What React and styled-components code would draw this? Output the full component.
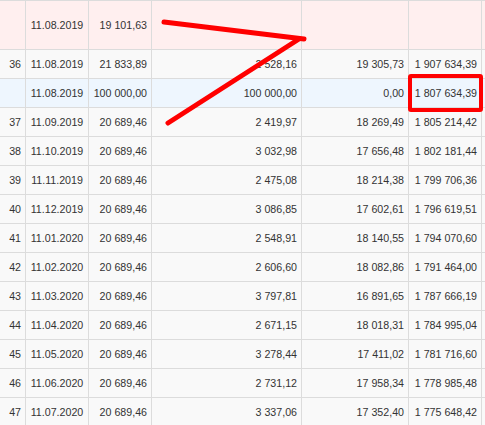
import styled, { createGlobalStyle } from "styled-components";

const GlobalStyle = createGlobalStyle`
  html, body {
    margin: 0;
    padding: 0;
    background: #f9f9f9;
    overflow: hidden;
  }
  body {
    font-family: "Liberation Sans", Arial, sans-serif;
    font-size: 10.67px;
    color: #333;
  }
`;

const rows = [
  { kind: "pink", num: "", date: "11.08.2019", pay: "19 101,63", a: "", b: "", rest: "" },
  { kind: "plain", num: "36", date: "11.08.2019", pay: "21 833,89", a: "2 528,16", b: "19 305,73", rest: "1 907 634,39" },
  { kind: "blue", num: "", date: "11.08.2019", pay: "100 000,00", a: "100 000,00", b: "0,00", rest: "1 807 634,39" },
  { kind: "plain", num: "37", date: "11.09.2019", pay: "20 689,46", a: "2 419,97", b: "18 269,49", rest: "1 805 214,42" },
  { kind: "plain", num: "38", date: "11.10.2019", pay: "20 689,46", a: "3 032,98", b: "17 656,48", rest: "1 802 181,44" },
  { kind: "plain", num: "39", date: "11.11.2019", pay: "20 689,46", a: "2 475,08", b: "18 214,38", rest: "1 799 706,36" },
  { kind: "plain", num: "40", date: "11.12.2019", pay: "20 689,46", a: "3 086,85", b: "17 602,61", rest: "1 796 619,51" },
  { kind: "plain", num: "41", date: "11.01.2020", pay: "20 689,46", a: "2 548,91", b: "18 140,55", rest: "1 794 070,60" },
  { kind: "plain", num: "42", date: "11.02.2020", pay: "20 689,46", a: "2 606,60", b: "18 082,86", rest: "1 791 464,00" },
  { kind: "plain", num: "43", date: "11.03.2020", pay: "20 689,46", a: "3 797,81", b: "16 891,65", rest: "1 787 666,19" },
  { kind: "plain", num: "44", date: "11.04.2020", pay: "20 689,46", a: "2 671,15", b: "18 018,31", rest: "1 784 995,04" },
  { kind: "plain", num: "45", date: "11.05.2020", pay: "20 689,46", a: "3 278,44", b: "17 411,02", rest: "1 781 716,60" },
  { kind: "plain", num: "46", date: "11.06.2020", pay: "20 689,46", a: "2 731,12", b: "17 958,34", rest: "1 778 985,48" },
  { kind: "plain", num: "47", date: "11.07.2020", pay: "20 689,46", a: "3 337,06", b: "17 352,40", rest: "1 775 648,42" },
];

const rowColors = {
  pink: "#ffefef",
  plain: "#f9f9f9",
  blue: "#eef6fe",
};

const Wrap = styled.div`
  position: relative;
  width: 485px;
  height: 425px;
  overflow: hidden;
  border-top: 1px solid #dcdcdc;
  box-sizing: border-box;
`;

const Row = styled.div`
  display: grid;
  grid-template-columns: 26px 63px 63px 150px 107px 73px;
  height: ${(p) => (p.$tall ? 48 : 28)}px;
  background: ${(p) => rowColors[p.$kind]};
  border-bottom: 1px solid #dcdcdc;
`;

const Cell = styled.div`
  display: flex;
  align-items: center;
  justify-content: ${(p) => (p.$center ? "center" : "flex-end")};
  padding: 0 4px;
  border-right: 1px solid #dcdcdc;
  white-space: nowrap;
  overflow: hidden;
`;

const Overlay = styled.svg`
  position: absolute;
  left: 0;
  top: 0;
  pointer-events: none;
`;

export default function App() {
  return (
    <>
      <GlobalStyle />
      <Wrap>
        {rows.map((r, i) => (
          <Row key={i} $kind={r.kind} $tall={i === 0}>
            <Cell>{r.num}</Cell>
            <Cell $center>{r.date}</Cell>
            <Cell>{r.pay}</Cell>
            <Cell>{r.a}</Cell>
            <Cell>{r.b}</Cell>
            <Cell>{r.rest}</Cell>
          </Row>
        ))}
        <Overlay width="485" height="425" viewBox="0 0 485 425">
          <g stroke="#ff0000" strokeWidth="5" strokeLinecap="round" fill="none">
            <line x1="164" y1="21" x2="304" y2="38" />
            <line x1="168" y1="122" x2="299" y2="38" />
          </g>
          <rect x="410" y="75" width="71" height="34" rx="1" fill="none" stroke="#ff0000" strokeWidth="4" />
        </Overlay>
      </Wrap>
    </>
  );
}
